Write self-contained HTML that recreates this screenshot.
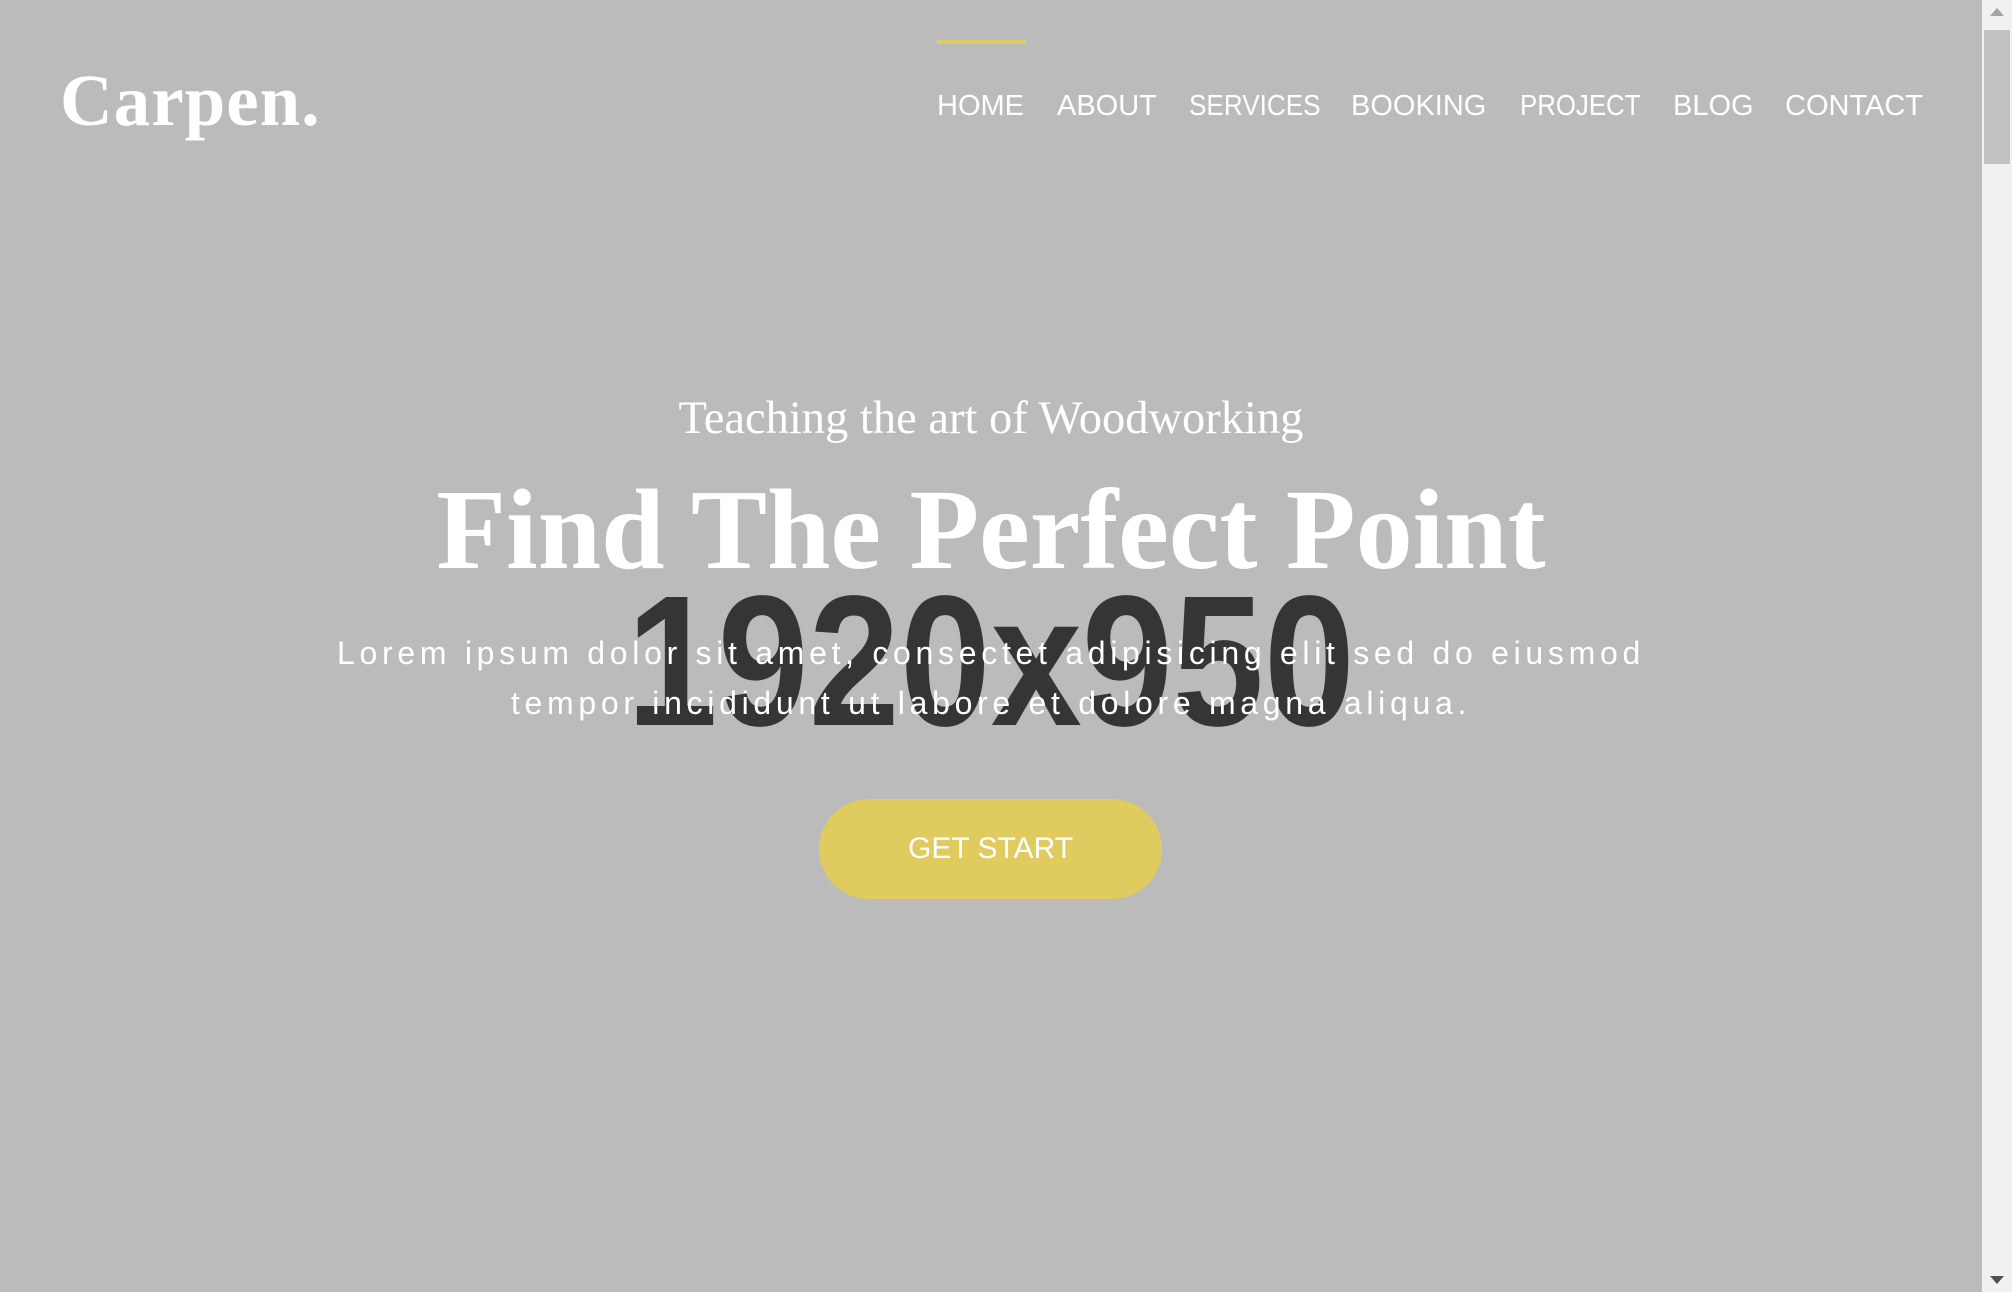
<!DOCTYPE html>
<html><head><meta charset="utf-8"><style>
html,body{margin:0;padding:0;}
body{width:2012px;height:1292px;background:#bbbbbb;position:relative;overflow:hidden;font-family:"Liberation Sans",sans-serif;color:#fff;}
.a{position:absolute;white-space:nowrap;}
.logo{left:60px;top:56px;font-family:"Liberation Serif",serif;font-weight:bold;font-size:73px;line-height:90px;letter-spacing:1px;}
.bar{left:937px;top:40px;width:89px;height:4px;background:#dfcb5e;}
.nav{top:88px;font-size:29px;line-height:36px;transform-origin:left center;}
.c{left:0;width:1982px;text-align:center;}
.sub{top:391px;font-family:"Liberation Serif",serif;font-size:46.5px;line-height:56px;}
.title{top:466px;font-family:"Liberation Serif",serif;font-weight:bold;font-size:114px;line-height:128px;}
.big{top:562px;font-weight:bold;font-size:186px;line-height:200px;color:#353535;}
.big span{display:inline-block;transform:scaleX(0.88);}
.lorem{top:628px;font-size:32px;line-height:50px;letter-spacing:4.7px;}
.btn{left:819px;top:799px;width:343px;height:100px;border-radius:50px;background:#dfcb5e;text-align:center;line-height:100px;font-size:30px;}
.sb{left:1982px;top:0;width:30px;height:1292px;background:#f1f1f1;}
.th{left:1984px;top:30px;width:26px;height:134px;background:#c1c1c1;}
</style></head><body>
<div class="a logo">Carpen.</div>
<div class="a bar"></div>
<div class="a nav" style="left:937px">HOME</div>
<div class="a nav" style="left:1057px">ABOUT</div>
<div class="a nav" style="left:1189px;transform:scaleX(0.9)">SERVICES</div>
<div class="a nav" style="left:1351px">BOOKING</div>
<div class="a nav" style="left:1520px;transform:scaleX(0.89)">PROJECT</div>
<div class="a nav" style="left:1673px">BLOG</div>
<div class="a nav" style="left:1785px">CONTACT</div>
<div class="a c big"><span>1920x950</span></div>
<div class="a c sub">Teaching the art of Woodworking</div>
<div class="a c title">Find The Perfect Point</div>
<div class="a c lorem">Lorem ipsum dolor sit amet, consectet adipisicing elit sed do eiusmod<br>tempor incididunt ut labore et dolore magna aliqua.</div>
<div class="a btn">GET START</div>
<div class="a sb"></div>
<div class="a th"></div>
<div class="a" style="left:1990px;top:8px;width:0;height:0;border-left:7px solid transparent;border-right:7px solid transparent;border-bottom:8px solid #a3a3a3;"></div>
<div class="a" style="left:1990px;top:1276px;width:0;height:0;border-left:7px solid transparent;border-right:7px solid transparent;border-top:8px solid #505050;"></div>
</body></html>
